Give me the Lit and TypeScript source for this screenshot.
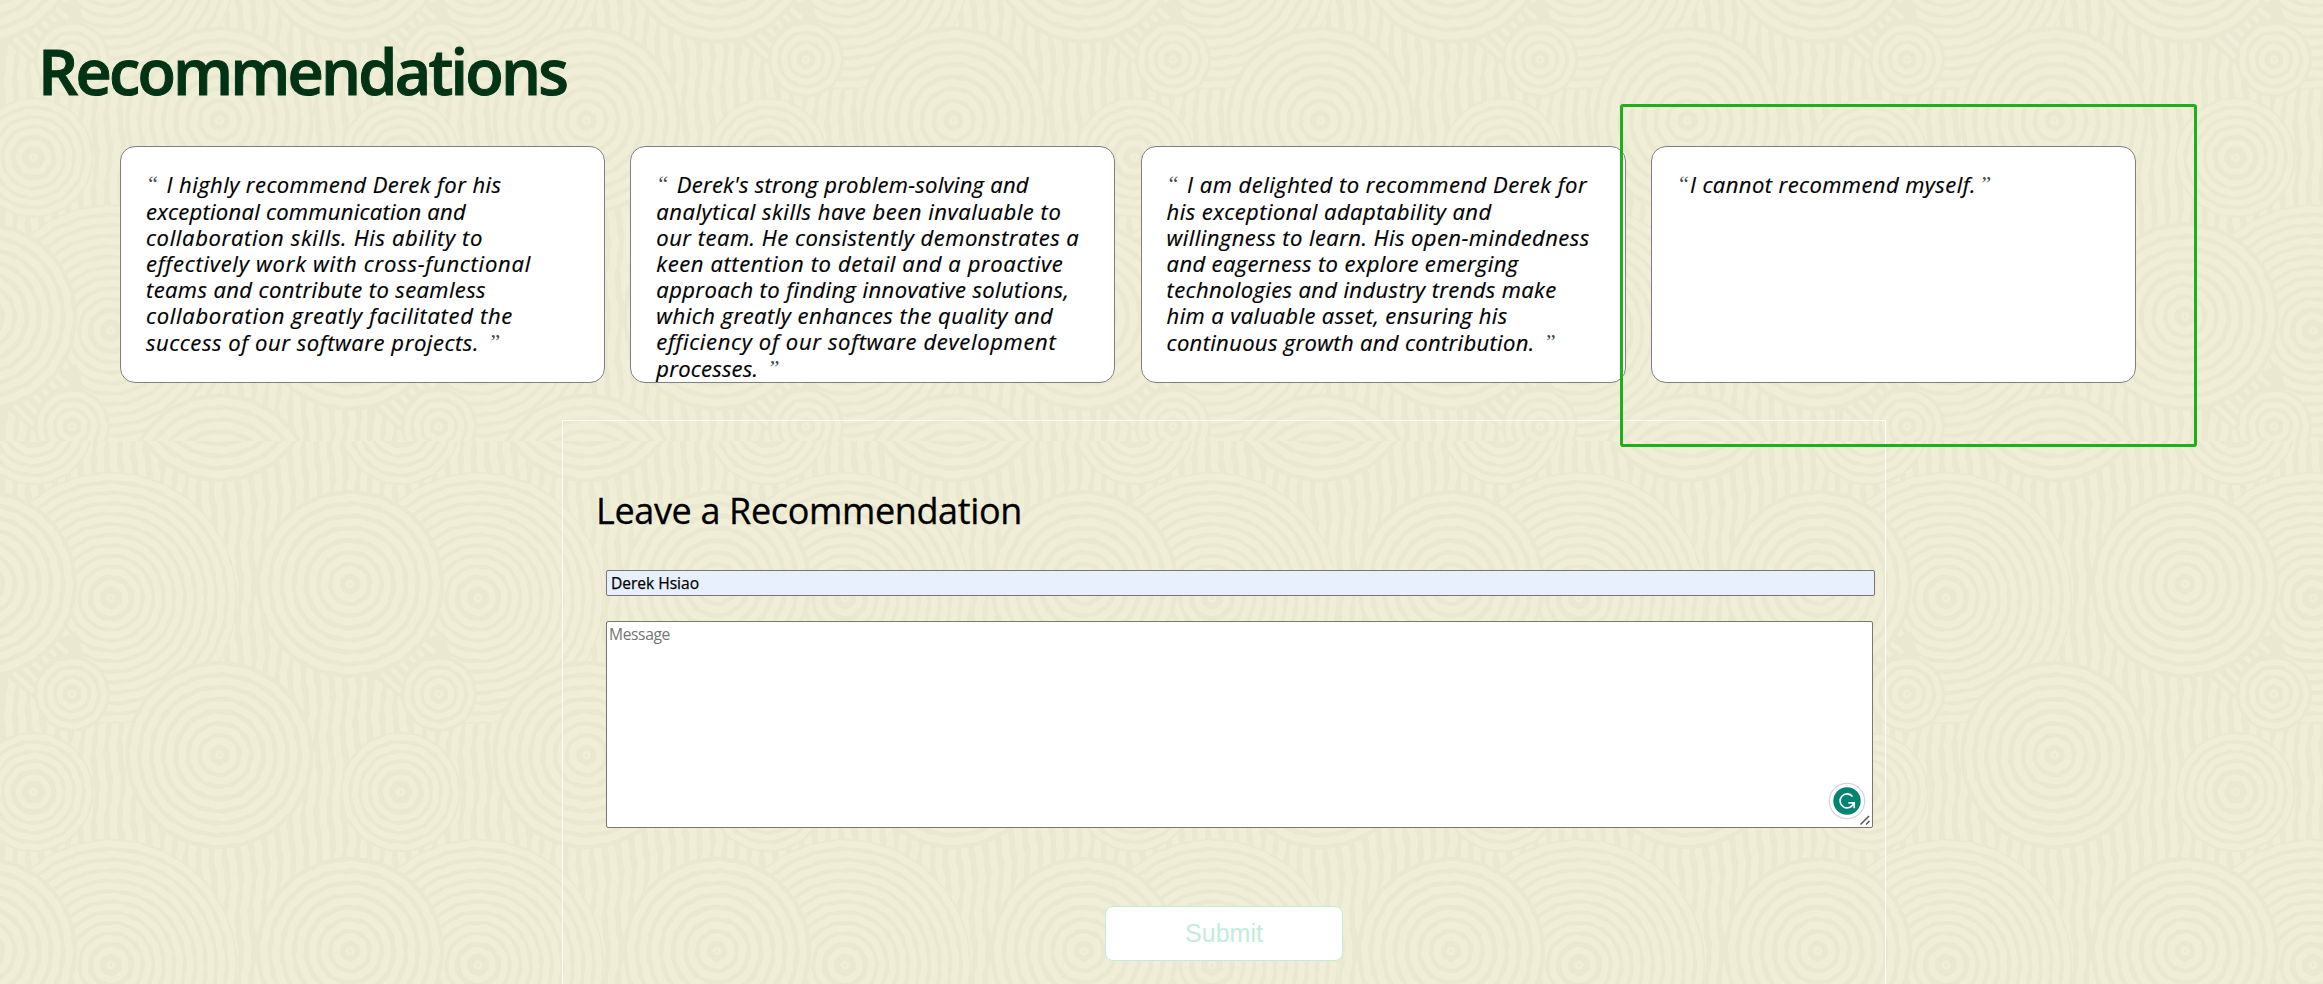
import { LitElement, html, svg, css } from "lit";
import { customElement, property, query } from "lit/decorators.js";

type Line = [text: string, width: number];
interface Quote {
  lead: number;
  trail: number;
  lines: Line[];
}

const QUOTES: Quote[] = [
  {
    lead: 20.5,
    trail: 9,
    lines: [
      ["I highly recommend Derek for his", 335],
      ["exceptional communication and", 320],
      ["collaboration skills. His ability to", 337],
      ["effectively work with cross-functional", 385],
      ["teams and contribute to seamless", 340],
      ["collaboration greatly facilitated the", 367],
      ["success of our software projects.", 333],
    ],
  },
  {
    lead: 20.5,
    trail: 9,
    lines: [
      ["Derek's strong problem-solving and", 352],
      ["analytical skills have been invaluable to", 405],
      ["our team. He consistently demonstrates a", 423],
      ["keen attention to detail and a proactive", 407],
      ["approach to finding innovative solutions,", 413],
      ["which greatly enhances the quality and", 397],
      ["efficiency of our software development", 400],
      ["processes.", 102],
    ],
  },
  {
    lead: 20.5,
    trail: 9,
    lines: [
      ["I am delighted to recommend Derek for", 400],
      ["his exceptional adaptability and", 325],
      ["willingness to learn. His open-mindedness", 423],
      ["and eagerness to explore emerging", 352],
      ["technologies and industry trends make", 390],
      ["him a valuable asset, ensuring his", 341],
      ["continuous growth and contribution.", 368],
    ],
  },
  { lead: 13, trail: 3, lines: [["I cannot recommend myself.", 286]] },
];

/* One run of text tracked so that it fills a given measure. */
@customElement("set-line")
export class SetLine extends LitElement {
  @property() text = "";
  @property({ type: Number }) measure = 0;
  @query("span") span!: HTMLSpanElement;

  static styles = css`
    :host { display: inline-block; white-space: nowrap; }
  `;

  updated() {
    this.span.style.letterSpacing = "0px";
    const natural = this.span.getBoundingClientRect().width;
    const step = (this.measure - natural) / this.text.length;
    this.span.style.letterSpacing = `${step.toFixed(3)}px`;
  }

  render() {
    return html`<span>${this.text}</span>`;
  }
}

const TILE = 367;
const LIGHT = "#f1eed8";
const DARK = "#eae8d1";

function ring(cx: number, cy: number, r: number, seed: number): string {
  const n = Math.max(18, Math.round(r * 1.6));
  const pts: string[] = [];
  for (let i = 0; i < n; i++) {
    const a = (i / n) * Math.PI * 2;
    const w =
      0.45 * Math.sin(a * Math.round(r / 5 + 3) + seed) +
      0.35 * Math.sin(a * Math.round(r / 2.6 + 4) + seed * 2.3);
    pts.push(`${(cx + (r + w) * Math.cos(a)).toFixed(1)} ${(cy + (r + w) * Math.sin(a)).toFixed(1)}`);
  }
  return `M${pts.join("L")}Z`;
}

function disc(cx: number, cy: number, edge: number, radii: number[], w: number) {
  return svg`
    <circle cx=${cx} cy=${cy} r=${edge} fill=${DARK}></circle>
    <path d=${radii.map((r, i) => ring(cx, cy, r, i * 1.7 + 1)).join("")} fill="none" stroke=${LIGHT} stroke-width=${w}></path>
    <circle cx=${cx} cy=${cy} r="4.6" fill=${LIGHT}></circle>
    <circle cx=${cx} cy=${cy} r="1.5" fill=${DARK}></circle>`;
}

const R_LARGE = [86, 74, 62, 50, 37.5, 25.7, 14];
const R_HUGE = [121, 110.5, 100, 89.5, 79, 68.5, 58, 47.5, 37, 26.5, 14.5];
const R_MID = [55, 45.3, 35.7, 26, 14.5];
const R_SMALL = [31.8, 22, 12.5];

function stripes(): string {
  let d = "";
  const step = TILE / 28;
  for (let i = 0; i < 28; i++) {
    const x = 10 + i * step;
    for (let y = -8; y <= TILE + 8; y += 5) {
      const t = (y / TILE) * Math.PI * 2;
      const dx = 1.8 * Math.sin(t * 5 + i * 0.45) + 0.7 * Math.sin(t * 17 + i * 2.1);
      d += `${y === -8 ? "M" : "L"}${(x + dx).toFixed(1)} ${y}`;
    }
  }
  return d;
}

const tile = svg`
  <rect width=${TILE} height=${TILE} fill=${DARK}></rect>
  <path d=${stripes()} fill="none" stroke=${LIGHT} stroke-width="7.6"></path>
  ${[0, TILE].map((dx) => disc(111 + dx, 157, 126, R_HUGE, 6.6))}
  <path d="M0 231L76 190L84 216L40 262Z" fill=${DARK}></path>
  <path d="M14 232L34 251M24 227L37 240M33 221L41 229M42 215L48 221M50 209L56 215M56 202L68 212" stroke=${LIGHT} stroke-width="5" fill="none"></path>
  ${disc(350, 143, 94, R_LARGE, 7.4)} ${disc(350 - TILE, 143, 94, R_LARGE, 7.4)}
  ${[0, -TILE].map((dy) => disc(219.5, 314 + dy, 94, R_LARGE, 7.4))}
  ${[0, -TILE].map((dy) => [0, TILE].map((dx) => disc(33.5 + dx, 351 + dy, 60, R_MID, 6)))}
  ${disc(72, 253, 38, R_SMALL, 5.8)}`;

@customElement("app-root")
export class AppRoot extends LitElement {
  static styles = css`
    :host {
      display: block;
      position: relative;
      height: 984px;
      overflow: hidden;
      color: #000;
      font-family: "Trebuchet MS", "Open Sans", sans-serif;
      background: #ebe9d2;
    }
    * { box-sizing: border-box; }
    .backdrop { position: absolute; inset: 0; width: 100%; height: 100%; }
    .page { position: relative; display: flow-root; }
    h1 {
      margin: 27px 0 0 38px;
      height: 119px;
      line-height: 88px;
      font-size: 63px;
      font-weight: 600;
      color: #003314;
      -webkit-text-stroke: 1px #003314;
    }
    .cards {
      display: grid;
      grid-template-columns: repeat(4, 485px);
      column-gap: 25.3px;
      padding-left: 120px;
    }
    .card {
      height: 237px;
      padding: 24px 0 0 25px;
      border: 1px solid #808080;
      border-radius: 15px;
      background: #fff;
      overflow: hidden;
      font-size: 22px;
      font-style: italic;
      line-height: 26px;
      font-weight: 500;
      -webkit-text-stroke: 0.2px #000;
    }
    .line { height: 26px; display: flex; }
    .line:first-child { height: 27px; }
    .line:last-child:not(:first-child) { padding-top: 1px; height: 27px; }
    .mark {
      font-family: "Liberation Serif", serif;
      font-size: 22px;
      font-weight: 400;
      color: #3c4a42;
      -webkit-text-stroke: 0;
    }
    .form {
      margin: 37px 0 0 562px;
      width: 1324px;
      height: 600px;
      border: 1px solid rgba(255, 255, 255, 0.9);
      padding: 65px 0 0 33px;
    }
    h2 { margin: 0; height: 84px; line-height: 50px; font-size: 36px; font-weight: 400; -webkit-text-stroke: 0.3px #000; }
    .name, .message {
      display: block;
      margin-left: 10px;
      border: 1px solid #767676;
      border-radius: 2px;
      font-size: 15.6px;
    }
    .name { width: 1269px; height: 26px; padding-left: 4px; line-height: 24px; background: #e8f0fe; -webkit-text-stroke: 0.25px #000; }
    .message {
      position: relative;
      margin-top: 25px;
      width: 1267px;
      height: 207px;
      padding-left: 2px;
      line-height: 25px;
      background: #fff;
      color: #757575;
    }
    .badge { position: absolute; right: 6px; bottom: 7px; width: 38px; height: 38px; }
    .grip { position: absolute; right: 1px; bottom: 1px; width: 12px; height: 12px; }
    .submit {
      display: block;
      margin: 78px 0 0 509px;
      width: 238px;
      height: 55px;
      padding: 0;
      border: 1px solid #c3ecdc;
      border-radius: 8px;
      background: #fff;
      color: #c3ecdc;
      font: 25px "Liberation Sans", Arial, sans-serif;
    }
    .highlight {
      position: absolute;
      left: 1620px;
      top: 104px;
      width: 577px;
      height: 343px;
      border: 3px solid #1cb01c;
      border-radius: 3px;
      pointer-events: none;
    }
  `;

  private card(q: Quote) {
    const last = q.lines.length - 1;
    return html`<article class="card">
      ${q.lines.map(
        ([text, width], i) => html`<div class="line">
          ${i === 0 ? html`<span class="mark" style="width:${q.lead}px">“</span>` : ""}
          <set-line .text=${text} .measure=${width}></set-line>
          ${i === last ? html`<span class="mark" style="padding-left:${q.trail}px">”</span>` : ""}
        </div>`
      )}
    </article>`;
  }

  render() {
    return html`
      <svg class="backdrop" aria-hidden="true">
        <defs>
          <pattern id="upper" width="367" height="367" y="173.5" patternUnits="userSpaceOnUse">${tile}</pattern>
          <pattern id="lower" width="367" height="367" y="441" patternUnits="userSpaceOnUse">${tile}</pattern>
        </defs>
        <rect width="100%" height="441" fill="url(#upper)"></rect>
        <rect y="441" width="100%" height="543" fill="url(#lower)"></rect>
      </svg>
      <main class="page">
        <h1><set-line .text=${"Recommendations"} .measure=${528}></set-line></h1>
        <section class="cards">${QUOTES.map((q) => this.card(q))}</section>
        <section class="form">
          <h2><set-line .text=${"Leave a Recommendation"} .measure=${426}></set-line></h2>
          <div class="name"><set-line .text=${"Derek Hsiao"} .measure=${88}></set-line></div>
          <div class="message">
            <set-line .text=${"Message"} .measure=${61}></set-line>
            <svg class="badge" viewBox="0 0 38 38">
              <circle cx="19" cy="19" r="17.7" fill="#fff" stroke="#d3d5e4" stroke-width="1.3"></circle>
              <circle cx="19" cy="19" r="13.7" fill="#038471"></circle>
              <path d="M24.6 14.6A7 7 0 1 0 25.6 21.5M20.4 20.9H26.2V26.2" fill="none" stroke="#fff" stroke-width="1.7"></path>
            </svg>
            <svg class="grip" viewBox="0 0 12 12">
              <path d="M1.5 10.5L10 2M7 10.5L10.5 7" fill="none" stroke="#555" stroke-width="1.5"></path>
            </svg>
          </div>
          <button class="submit">Submit</button>
        </section>
      </main>
      <div class="highlight"></div>
    `;
  }
}
